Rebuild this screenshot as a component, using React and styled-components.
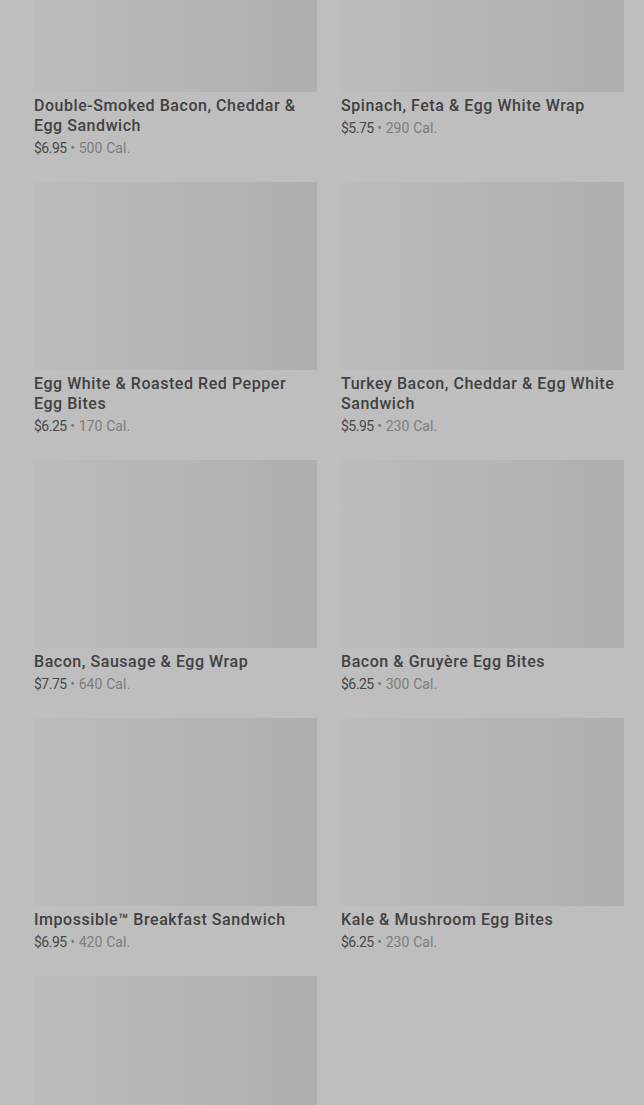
import React from 'react';
import styled, { createGlobalStyle } from 'styled-components';

const GlobalStyle = createGlobalStyle`
    html, body {
        margin: 0;
        padding: 0;
        background: #bebebe;
        overflow: hidden;
    }
    body {
        font-family: Roboto, "Liberation Sans", sans-serif;
    }
`;

const Page = styled.div`
    height: 1105px;
    overflow: hidden;
    background: #bebebe;
`;

const Grid = styled.div`
    display: grid;
    grid-template-columns: 283px 283px;
    column-gap: 24px;
    row-gap: 25px;
    padding: 0 20px 0 34px;
    margin-top: -96px;
`;

const Card = styled.div`
    display: flex;
    flex-direction: column;
`;

const Picture = styled.div`
    height: 188px;
    background: linear-gradient(90deg, #bcbcbc 0%, #b6b6b6 45%, #afafaf 100%);
`;

const Title = styled.div`
    margin-top: 4px;
    font-size: 16px;
    line-height: 20px;
    font-weight: 500;
    color: #414141;
    letter-spacing: 0.55px;
`;

const Meta = styled.div`
    margin-top: 3px;
    font-size: 14px;
    line-height: 18px;
    color: #7c7c7c;
    letter-spacing: 0.1px;
`;

const Price = styled.span`
    color: #484848;
    letter-spacing: -0.5px;
`;

const items = [
    { name: 'Double-Smoked Bacon, Cheddar & Egg Sandwich', price: '$6.95', cal: '500' },
    { name: 'Spinach, Feta & Egg White Wrap', price: '$5.75', cal: '290' },
    { name: 'Egg White & Roasted Red Pepper Egg Bites', price: '$6.25', cal: '170' },
    { name: 'Turkey Bacon, Cheddar & Egg White Sandwich', price: '$5.95', cal: '230' },
    { name: 'Bacon, Sausage & Egg Wrap', price: '$7.75', cal: '640' },
    { name: 'Bacon & Gruyère Egg Bites', price: '$6.25', cal: '300' },
    { name: 'Impossible™ Breakfast Sandwich', price: '$6.95', cal: '420' },
    { name: 'Kale & Mushroom Egg Bites', price: '$6.25', cal: '230' },
    { name: null },
];

const MenuCard = ({ name, price, cal }) => (
    <Card>
        <Picture />
        {name && (
            <>
                <Title>{name}</Title>
                <Meta>
                    <Price>{price}</Price> • {cal} Cal.
                </Meta>
            </>
        )}
    </Card>
);

const App = () => {
    // first row is scrolled partly out of view, so it sits above the top edge
    return (
        <Page>
            <GlobalStyle />
            <Grid>
                {items.map((item, i) => (
                    <MenuCard key={i} {...item} />
                ))}
            </Grid>
        </Page>
    );
};

export default App;
